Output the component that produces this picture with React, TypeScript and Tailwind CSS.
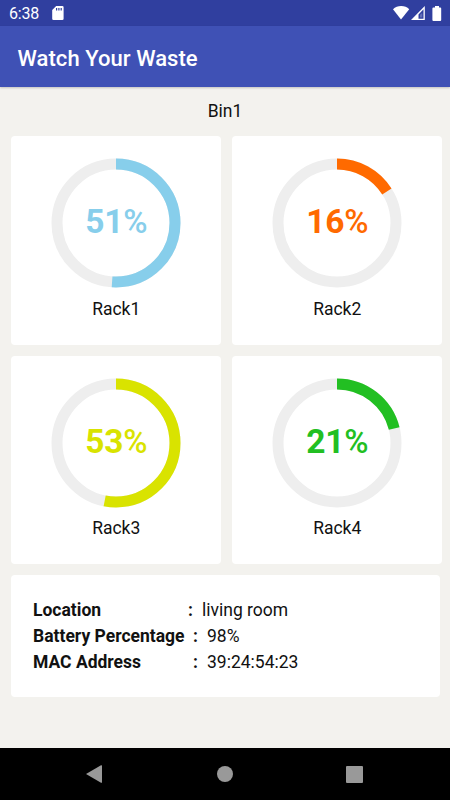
interface Rack {
  name: string
  percent: number
  color: string
}

const RACKS: Rack[] = [
  { name: 'Rack1', percent: 51, color: '#87ceeb' },
  { name: 'Rack2', percent: 16, color: '#ff6a00' },
  { name: 'Rack3', percent: 53, color: '#d9e300' },
  { name: 'Rack4', percent: 21, color: '#22bf22' },
]

const DETAILS = [
  { label: 'Location', value: 'living room', labelWidth: 'w-[155px]' },
  { label: 'Battery Percentage', value: '98%', labelWidth: 'w-[160px]' },
  { label: 'MAC Address', value: '39:24:54:23', labelWidth: 'w-[160px]' },
]

function StatusBar() {
  return (
    <div className="flex h-[26px] items-center bg-[#303f9f] pl-[9px] pr-[8px] text-white">
      <span className="pt-[2px] text-[16px] leading-[24px] tracking-[-0.2px]">6:38</span>
      <svg className="ml-[13px]" width="12" height="14" viewBox="0 0 12 14">
        <path
          fillRule="evenodd"
          fill="currentColor"
          d="M4.2 0H10.3Q11.6 0 11.6 1.3V12.7Q11.6 14 10.3 14H1.5Q.2 14 .2 12.7V4ZM4 2v2.5h1.2V2ZM6.3 2v2.5h1.2V2ZM8.6 2v2.5H9.8V2Z"
        />
      </svg>
      <svg className="ml-auto" width="17" height="14" viewBox="0 0 17 14">
        <path fill="currentColor" d="M8 13.5 0 3.2C2.2 1 5 0 8.2 0s6 1 8 3.2Z" />
      </svg>
      <svg className="ml-[1px]" width="14" height="14" viewBox="0 0 14 14">
        <path fillRule="evenodd" fill="currentColor" d="M13.8 0V14H0ZM12.5 3.3 7.5 8.4V12.7H12.5Z" />
        <path fill="currentColor" d="M10 7.5h1.3v4H9V8.7Z" opacity=".25" />
      </svg>
      <svg className="ml-[7px]" width="10" height="15" viewBox="0 0 10 15">
        <path fill="currentColor" d="M3 0h4v1.5h1.2q1 0 1 1V14q0 1-1 1H1.4q-1 0-1-1V2.5q0-1 1-1H3Z" />
      </svg>
    </div>
  )
}

function Gauge({ percent, color }: { percent: number; color: string }) {
  const radius = 59
  const length = 2 * Math.PI * radius

  return (
    <div className="grid h-[130px] w-[130px] place-items-center">
      <svg className="col-start-1 row-start-1 -rotate-90" width="130" height="130" viewBox="0 0 130 130">
        <circle cx="65" cy="65" r={radius} fill="none" stroke="#eeeeee" strokeWidth="11" />
        <circle
          cx="65"
          cy="65"
          r={radius}
          fill="none"
          stroke={color}
          strokeWidth="11"
          strokeDasharray={`${(length * percent) / 100} ${length}`}
        />
      </svg>
      <span
        className="col-start-1 row-start-1 pb-[2px] text-[33.5px] leading-[40px] font-bold tracking-[-0.3px]"
        style={{ color }}
      >
        {percent}
        <span className="text-[33px] font-medium">%</span>
      </span>
    </div>
  )
}

function RackCard({ rack }: { rack: Rack }) {
  return (
    <div className="flex h-[208.5px] flex-col items-center rounded-[4px] bg-white pt-[22px] pl-[0.5px]">
      <Gauge percent={rack.percent} color={rack.color} />
      <span className="mt-[9.9px] text-[17.5px] leading-[22px]">{rack.name}</span>
    </div>
  )
}

export default function App() {
  return (
    <div className="flex h-[800px] w-[450px] flex-col overflow-hidden bg-[#f3f2ee] font-['Roboto',sans-serif] text-[#111111]">
      <StatusBar />
      <header className="flex h-[61px] items-center bg-[#3f51b5] pl-[17.5px] pt-[3px] shadow-[0_1px_2px_rgba(0,0,0,0.2)]">
        <h1 className="text-[22px] font-medium tracking-[0.05px] text-white">Watch Your Waste</h1>
      </header>

      <main className="flex-1 pl-[11px]">
        <h2 className="pt-[13px] pr-[11px] text-center text-[17.5px] leading-[22px]">Bin1</h2>
        <div className="mt-[14px] grid grid-cols-[210px_210px] gap-[11px]">
          {RACKS.map(rack => (
            <RackCard key={rack.name} rack={rack} />
          ))}
        </div>
        <div className="mt-[11px] h-[122.4px] w-[429px] rounded-[4px] bg-white pt-[21.7px] pl-[22px]">
          {DETAILS.map(item => (
            <div key={item.label} className="flex h-[26.3px] items-center text-[17.5px]">
              <span className={`${item.labelWidth} font-bold`}>{item.label}</span>
              <span className="w-[14px] font-bold">:</span>
              <span>{item.value}</span>
            </div>
          ))}
        </div>
      </main>

      <nav className="flex h-[52px] items-center bg-black text-[#999999]">
        <svg className="ml-[86px]" width="16" height="18" viewBox="0 0 16 18">
          <path fill="currentColor" d="M0 9 15 .3q1-.5 1 .5V17.2q0 1-1 .5Z" />
        </svg>
        <div className="ml-[115px] h-[16px] w-[16px] rounded-full bg-[#999999]" />
        <div className="ml-[113px] h-[17px] w-[17px] rounded-[1px] bg-[#999999]" />
      </nav>
    </div>
  )
}
